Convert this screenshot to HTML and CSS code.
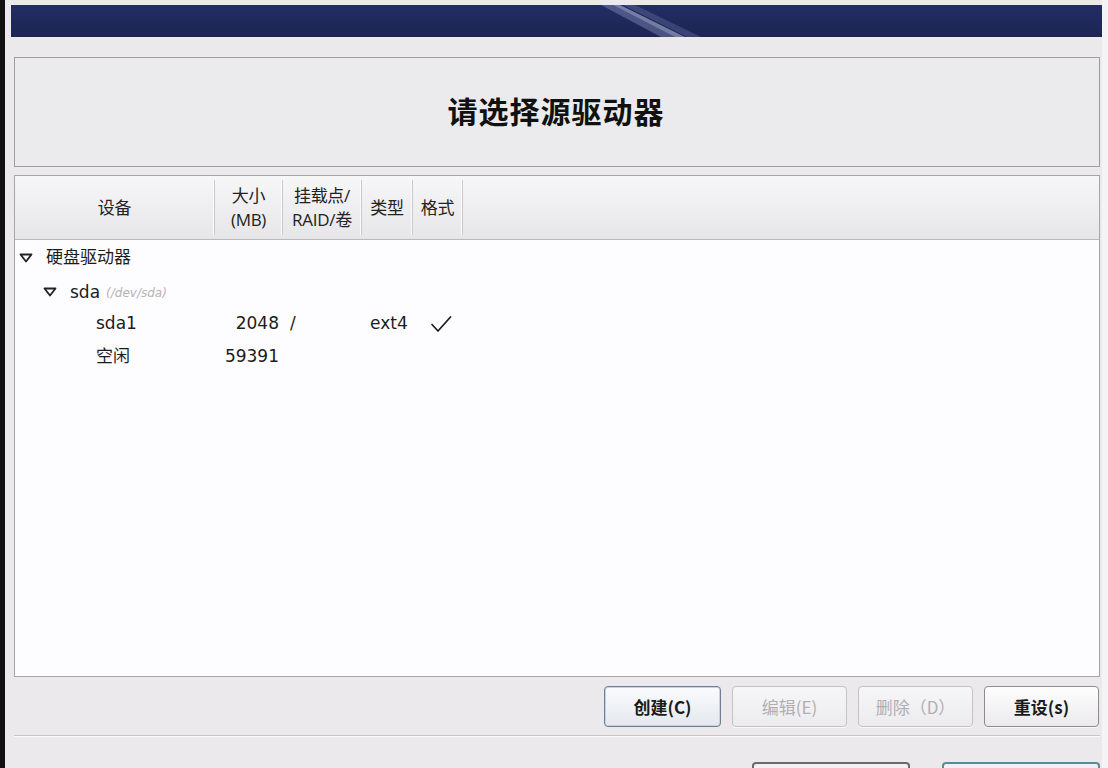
FILE: index.html
```html
<html>
    <head>
        <link rel="stylesheet" href="styles.css">
        <meta charset="utf-8">
        <title>请选择源驱动器</title>
    </head>
    <body>
        <div class="screen">
            <div class="banner">
                <svg class="streak" viewBox="0 0 1091 32" preserveAspectRatio="none">
                    <polygon points="590,0 602,0 664,32 650,32" fill="#8f9bc8" opacity="0.4"/>
                    <polygon points="602,0 609,0 674,32 664,32" fill="#c9d0ec" opacity="0.5"/>
                    <polygon points="612,0 624,0 690,32 676,32" fill="#7d89bb" opacity="0.3"/>
                </svg>
            </div>
            <div class="main">
                <div class="titlebox">
                    <h1 class="title">请选择源驱动器</h1>
                </div>

                <div class="table">
                    <div class="head cols">
                        <div class="hcell">设备</div>
                        <div class="hcell">大小<br>(MB)</div>
                        <div class="hcell">挂载点/<br>RAID/卷</div>
                        <div class="hcell">类型</div>
                        <div class="hcell">格式</div>
                        <div class="hcell filler"></div>
                    </div>
                    <div class="rows">
                        <div class="row cols">
                            <div class="cell name lvl1">
                                <svg class="expander" viewBox="0 0 14 10"><polygon points="1.5,1.5 12.5,1.5 7,8.5" fill="none" stroke="#222" stroke-width="1.8" stroke-linejoin="round"/></svg>
                                <span>硬盘驱动器</span>
                            </div>
                        </div>
                        <div class="row cols">
                            <div class="cell name lvl2">
                                <svg class="expander" viewBox="0 0 14 10"><polygon points="1.5,1.5 12.5,1.5 7,8.5" fill="none" stroke="#222" stroke-width="1.8" stroke-linejoin="round"/></svg>
                                <span>sda</span> <span class="devpath">(/dev/sda)</span>
                            </div>
                        </div>
                        <div class="row cols">
                            <div class="cell name lvl3">sda1</div>
                            <div class="cell size">2048</div>
                            <div class="cell mount">/</div>
                            <div class="cell type">ext4</div>
                            <div class="cell fmt">
                                <svg class="check" viewBox="0 0 22 18"><path d="M2 9.5 L8 16 L20.5 2" fill="none" stroke="#1a1a1a" stroke-width="1.7" stroke-linecap="round" stroke-linejoin="round"/></svg>
                            </div>
                        </div>
                        <div class="row cols">
                            <div class="cell name lvl3">空闲</div>
                            <div class="cell size">59391</div>
                        </div>
                    </div>
                </div>

                <div class="actions">
                    <button class="btn focused">创建(C)</button>
                    <button class="btn disabled">编辑(E)</button>
                    <button class="btn disabled">删除（D）</button>
                    <button class="btn">重设(s)</button>
                </div>

                <div class="separator"></div>

                <div class="nav">
                    <button class="navbtn back"></button>
                    <button class="navbtn next"></button>
                </div>
            </div>
        </div>
    </body>
</html>
```

FILE: styles.css
```css
html {padding: 0;}
body {margin: 0; padding: 0; overflow: hidden; background: #ebe9ec;
    font-family: "DejaVu Sans", "Noto Sans CJK SC", sans-serif; font-size: 17px; color: #1c1c1c;}

.screen {height: 768px; border-left: 5px solid #111; box-sizing: border-box; overflow: hidden;
    background: linear-gradient(to right, #ebe9ec 0, #ebe9ec 1097px, #f4f3f6 1097px);}

.banner {position: relative; height: 32px; margin: 5px 6px 0 6px; background: #1f2858;
    background: linear-gradient(to bottom, #232d63, #1c2552); overflow: hidden;}
.streak {position: absolute; left: 0; top: 0; width: 100%; height: 100%;}

.main {padding: 0 8px 0 9px;}

.titlebox {height: 110px; margin-top: 20px; box-sizing: border-box; border: 1px solid #9d9c9f;
    background: #ebeaec; display: flex; align-items: center; justify-content: center; padding-bottom: 4px;}
.title {margin: 0; font-family: "Noto Sans CJK SC", sans-serif; font-size: 30px; font-weight: bold;
    letter-spacing: 1px; color: #111; padding-right: 2px;}

.table {height: 502px; margin-top: 8px; box-sizing: border-box; border: 1px solid #a6a5a8;
    background: #fdfcfe; display: flex; flex-direction: column;}

.cols {display: grid; grid-template-columns: 200px 68px 79px 51px 50px 1fr;}

.head {height: 63px; border-bottom: 1px solid #b9b8bb;
    background: linear-gradient(to bottom, #f7f7f8, #e6e5e8);}
.hcell {display: flex; align-items: center; justify-content: center; text-align: center;
    font-family: "Open Sans", "Noto Sans CJK SC", sans-serif; font-size: 17px; line-height: 24px; color: #222;
    border-right: 1px solid #c9c8cb; box-shadow: inset -1px 0 0 #fbfbfc; margin: 4px 0; letter-spacing: -0.3px;}
.hcell.filler {border-right: none; box-shadow: none;}

.rows {padding-top: 1px;}
.row {height: 33px; align-items: center;}
.cell {white-space: nowrap; line-height: 33px;}
.name {display: flex; align-items: center;}
.lvl1 {padding-left: 4px;}
.lvl2 {padding-left: 28px;}
.lvl3 {padding-left: 81px; grid-column: 1;}
.expander {width: 14px; height: 10px; margin-right: 13px;}
.name span {font-family: "DejaVu Sans", "Noto Sans CJK SC", sans-serif;}
.devpath {font-size: 12px; font-style: italic; color: #b4b3b8; margin-left: 6px; margin-top: 3px;}
.size {text-align: right; padding-right: 4px;}
.mount {padding-left: 7px;}
.type {padding-left: 8px;}
.fmt {padding-left: 17px; display: flex; align-items: center;}
.check {width: 22px; height: 18px;}

.actions {display: flex; justify-content: flex-end; gap: 11px; margin-top: 9px; padding-right: 1px;}
.btn {width: 115px; height: 41px; border: 1px solid #8c8b8e; border-radius: 4px;
    background: linear-gradient(to bottom, #fefefe, #ebeaec); box-shadow: 0 1px 0 #fafafa;
    font-family: "Noto Sans CJK SC", sans-serif; font-size: 17px; font-weight: bold; color: #1a1a1a;}
.btn.focused {width: 117px; border-color: #6d7f93; background: linear-gradient(to bottom, #fafbfd, #e4e8ee);
    box-shadow: inset 0 0 0 1px #c9d3df;}
.btn.disabled {border-color: #c3c2c5; color: #b0afb3; font-weight: normal;
    background: linear-gradient(to bottom, #f6f5f7, #ecebee);}

.separator {margin-top: 8px; height: 1px; border-top: 1px solid #c6c5c8; background: #fafafa;}

.nav {display: flex; justify-content: flex-end; gap: 32px; margin-top: 25px; padding-right: 0;}
.navbtn {width: 158px; height: 40px; border-radius: 4px; background: #f1f0f2;}
.navbtn.back {border: 2px solid #6a6a6d;}
.navbtn.next {border: 2px solid #5b8b97;}
```
